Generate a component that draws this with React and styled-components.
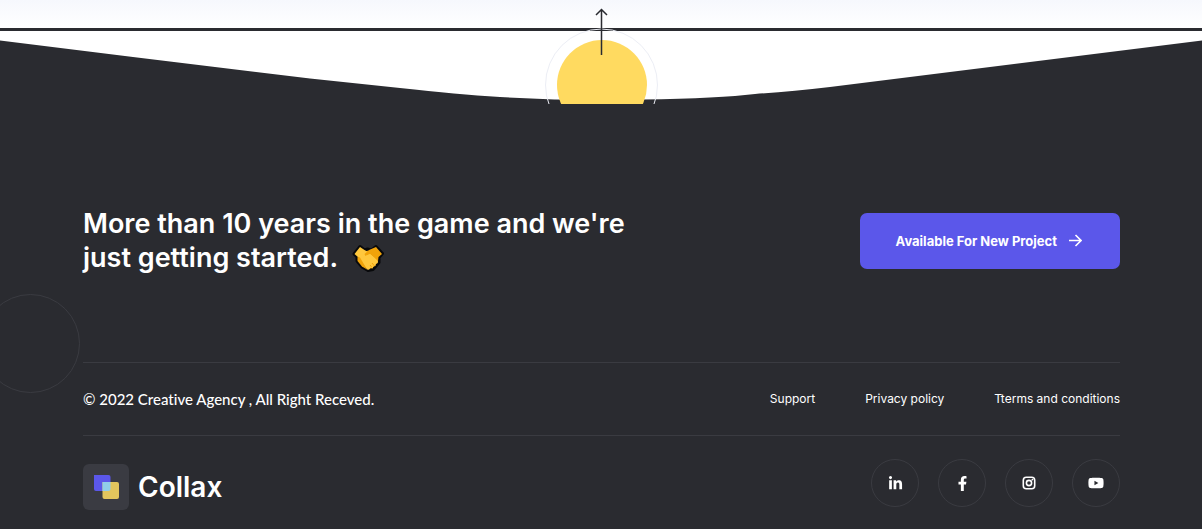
import React from "react";
import styled, { createGlobalStyle } from "styled-components";
import { FaLinkedinIn, FaFacebookF, FaYoutube } from "react-icons/fa";

const ink = "#2a2b30";
const rule = "#3a3b41";

const GlobalStyle = createGlobalStyle`
  *, *::before, *::after { box-sizing: border-box; }
  body {
    margin: 0;
    background: ${ink};
    color: #fff;
    font-family: Inter, "Liberation Sans", sans-serif;
  }
  a { color: inherit; text-decoration: none; }
  h2, p, ul { margin: 0; padding: 0; }
`;

const Page = styled.div`
  position: relative;
  overflow: hidden;
`;

const SectionEnd = styled.div`
  height: 31px;
  background: linear-gradient(#f6f8fd, #fff 28px);
  border-bottom: 3px solid ${ink};
`;

const Wave = styled.svg`
  display: block;
  width: 100%;
  height: 73px;
  background: #fff;
`;

const BackToTop = styled.a`
  position: absolute;
  top: 8px;
  left: 50%;
  margin-left: -58px;
  svg { display: block; }
`;

const Ring = styled.span`
  position: absolute;
  top: 294px;
  left: -19px;
  width: 99px;
  height: 99px;
  border: 1px solid ${rule};
  border-radius: 50%;
`;

const Footer = styled.footer`
  padding: 103px 82px 19px 83px;
`;

const CallToAction = styled.section`
  display: flex;
  justify-content: space-between;
  align-items: center;
  gap: 32px;
  padding-bottom: 87px;
`;

const Heading = styled.h2`
  max-width: 600px;
  font-size: 27px;
  line-height: 34px;
  font-weight: 600;
  svg { vertical-align: -5px; margin-left: 8px; }
`;

const ProjectButton = styled.button`
  display: flex;
  align-items: center;
  justify-content: center;
  gap: 11px;
  flex: none;
  height: 56px;
  padding: 0 38px 0 36px;
  border: 0;
  border-radius: 7px;
  background: #5b57ea;
  color: #fff;
  font: 700 13px/20px Inter, "Liberation Sans", sans-serif;
  cursor: pointer;
`;

const LegalRow = styled.div`
  display: flex;
  justify-content: space-between;
  align-items: center;
  gap: 32px;
  min-height: 74px;
  border: solid ${rule};
  border-width: 1px 0;
`;

const Copyright = styled.p`
  font-family: Lato, "Liberation Sans", sans-serif;
  font-variant-ligatures: none;
  font-size: 15px;
  line-height: 20px;
  font-weight: 500;
`;

const Links = styled.nav`
  display: flex;
  gap: 50px;
  font-size: 12px;
  line-height: 20px;
  font-weight: 400;
`;

const BrandRow = styled.div`
  display: flex;
  justify-content: space-between;
  align-items: flex-end;
  padding-top: 23px;
`;

const Brand = styled.a`
  display: flex;
  align-items: center;
  gap: 9px;
  margin-bottom: -3px;
  font-size: 28px;
  line-height: 46px;
  font-weight: 600;
`;

const SocialList = styled.ul`
  display: flex;
  gap: 19px;
  list-style: none;
`;

const SocialLink = styled.a`
  display: grid;
  place-items: center;
  width: 48px;
  height: 48px;
  border: 1px solid ${rule};
  border-radius: 50%;
  font-size: ${(p) => p.$size}px;
`;

function Instagram() {
  return (
    <svg width="14" height="14" viewBox="0 0 14 14" fill="none" stroke="#fff" aria-hidden="true">
      <rect x="1.300" y="1.300" width="11.400" height="11.400" rx="3" strokeWidth="1.600" />
      <circle cx="7" cy="7" r="2.600" strokeWidth="1.600" />
      <circle cx="10.400" cy="3.600" r="0.900" fill="#fff" stroke="none" />
    </svg>
  );
}

const legal = ["Support", "Privacy policy", "Tterms and conditions"];

const socials = [
  { name: "LinkedIn", Icon: FaLinkedinIn, size: 15 },
  { name: "Facebook", Icon: FaFacebookF, size: 15 },
  { name: "Instagram", Icon: Instagram, size: 15 },
  { name: "YouTube", Icon: FaYoutube, size: 16 },
];

function Handshake() {
  return (
    <svg width="32" height="28" viewBox="0 0 32 28" role="img" aria-label="handshake">
      <path
        d="M8 2.500 2 10l3 3v4l5 6 6 3.500 5-1 6-7v-5l3.500-4L24 2.500 19.500 6l-4-1-3 1z"
        fill="#f0a30a" stroke="#08090b" strokeWidth="3" strokeLinejoin="round"
      />
      <path d="M8 3 2.500 10 7 14l8 11.500 2 .3 1.500-2 2 .7 1-2 2-.5.3-2 2-1v-2L18 10l5 5 3-1.500L12.500 6z" fill="#ffc83d" />
      <path d="M8 13.500 5.500 13v4l4.500 5.500 5 3z" fill="#f0a30a" />
      <path d="M24 3 17 6l-4.500 4 1 2 4.500-2 8 7 .5-4 3.500-3z" fill="#f0a30a" />
      <path d="M13.500 12 18 10l8 7-3 4-8-4z" fill="#ffc83d" />
      <path d="m18 21 2 2.500m0-4.500 2.500 3" stroke="#f0a30a" strokeWidth="1" />
    </svg>
  );
}

function Logo() {
  return (
    <svg width="46" height="46" viewBox="0 0 46 46" aria-hidden="true">
      <rect width="46" height="46" rx="6" fill="#3a3b42" />
      <path d="M11 11h14.500a2 2 0 0 1 2 2v12a2 2 0 0 1-2 2H13a2 2 0 0 1-2-2z" fill="#5b57ea" />
      <path d="M19.500 18H34a2 2 0 0 1 2 2v13a2 2 0 0 1-2 2H21.500a2 2 0 0 1-2-2z" fill="#e2c55d" />
      <path d="M19.500 18h8v7a2 2 0 0 1-2 2h-6z" fill="#90cdea" />
    </svg>
  );
}

export default function App() {
  return (
    <>
      <GlobalStyle />
      <Page>
        <SectionEnd />
        <Wave viewBox="0 31 1202 73" preserveAspectRatio="none" aria-hidden="true">
          <path
            d="M0 40.500 133 57 310 78.500 400 88 C440 92 470 95.500 500 97 Q550 100 601 100 Q690 99.500 735 96 L755 94 Q790 91.500 830 87 L1202 40.500V104H0z"
            fill={ink}
          />
        </Wave>
        <BackToTop href="#top" aria-label="Back to top">
          <svg width="116" height="96" viewBox="0 0 116 96" fill="none">
            <circle cx="58.500" cy="77" r="56" stroke="#eceef5" />
            <circle cx="59" cy="77" r="45" fill="#ffda60" />
            <path d="M58.500 47V2M53 7l5.500-5.500L64 7" stroke={ink} strokeWidth="1.500" />
          </svg>
        </BackToTop>
        <Ring />
        <Footer>
          <CallToAction>
            <Heading>
              More than 10 years in the game and we're
              <br />
              just getting started. <Handshake />
            </Heading>
            <ProjectButton type="button">
              Available For New Project
              <svg width="14" height="14" viewBox="0 0 14 14" fill="none" stroke="#fff" strokeWidth="1.600" aria-hidden="true">
                <path d="M1 6.500h11.500M7.500 1 13 6.500 7.500 12" />
              </svg>
            </ProjectButton>
          </CallToAction>
          <LegalRow>
            <Copyright>© 2022 Creative Agency , All Right Receved.</Copyright>
            <Links aria-label="Legal">
              {legal.map((label) => (
                <a key={label} href="#legal">{label}</a>
              ))}
            </Links>
          </LegalRow>
          <BrandRow>
            <Brand href="#home">
              <Logo />
              Collax
            </Brand>
            <SocialList>
              {socials.map(({ name, Icon, size }) => (
                <li key={name}>
                  <SocialLink href="#social" aria-label={name} $size={size}>
                    <Icon />
                  </SocialLink>
                </li>
              ))}
            </SocialList>
          </BrandRow>
        </Footer>
      </Page>
    </>
  );
}
